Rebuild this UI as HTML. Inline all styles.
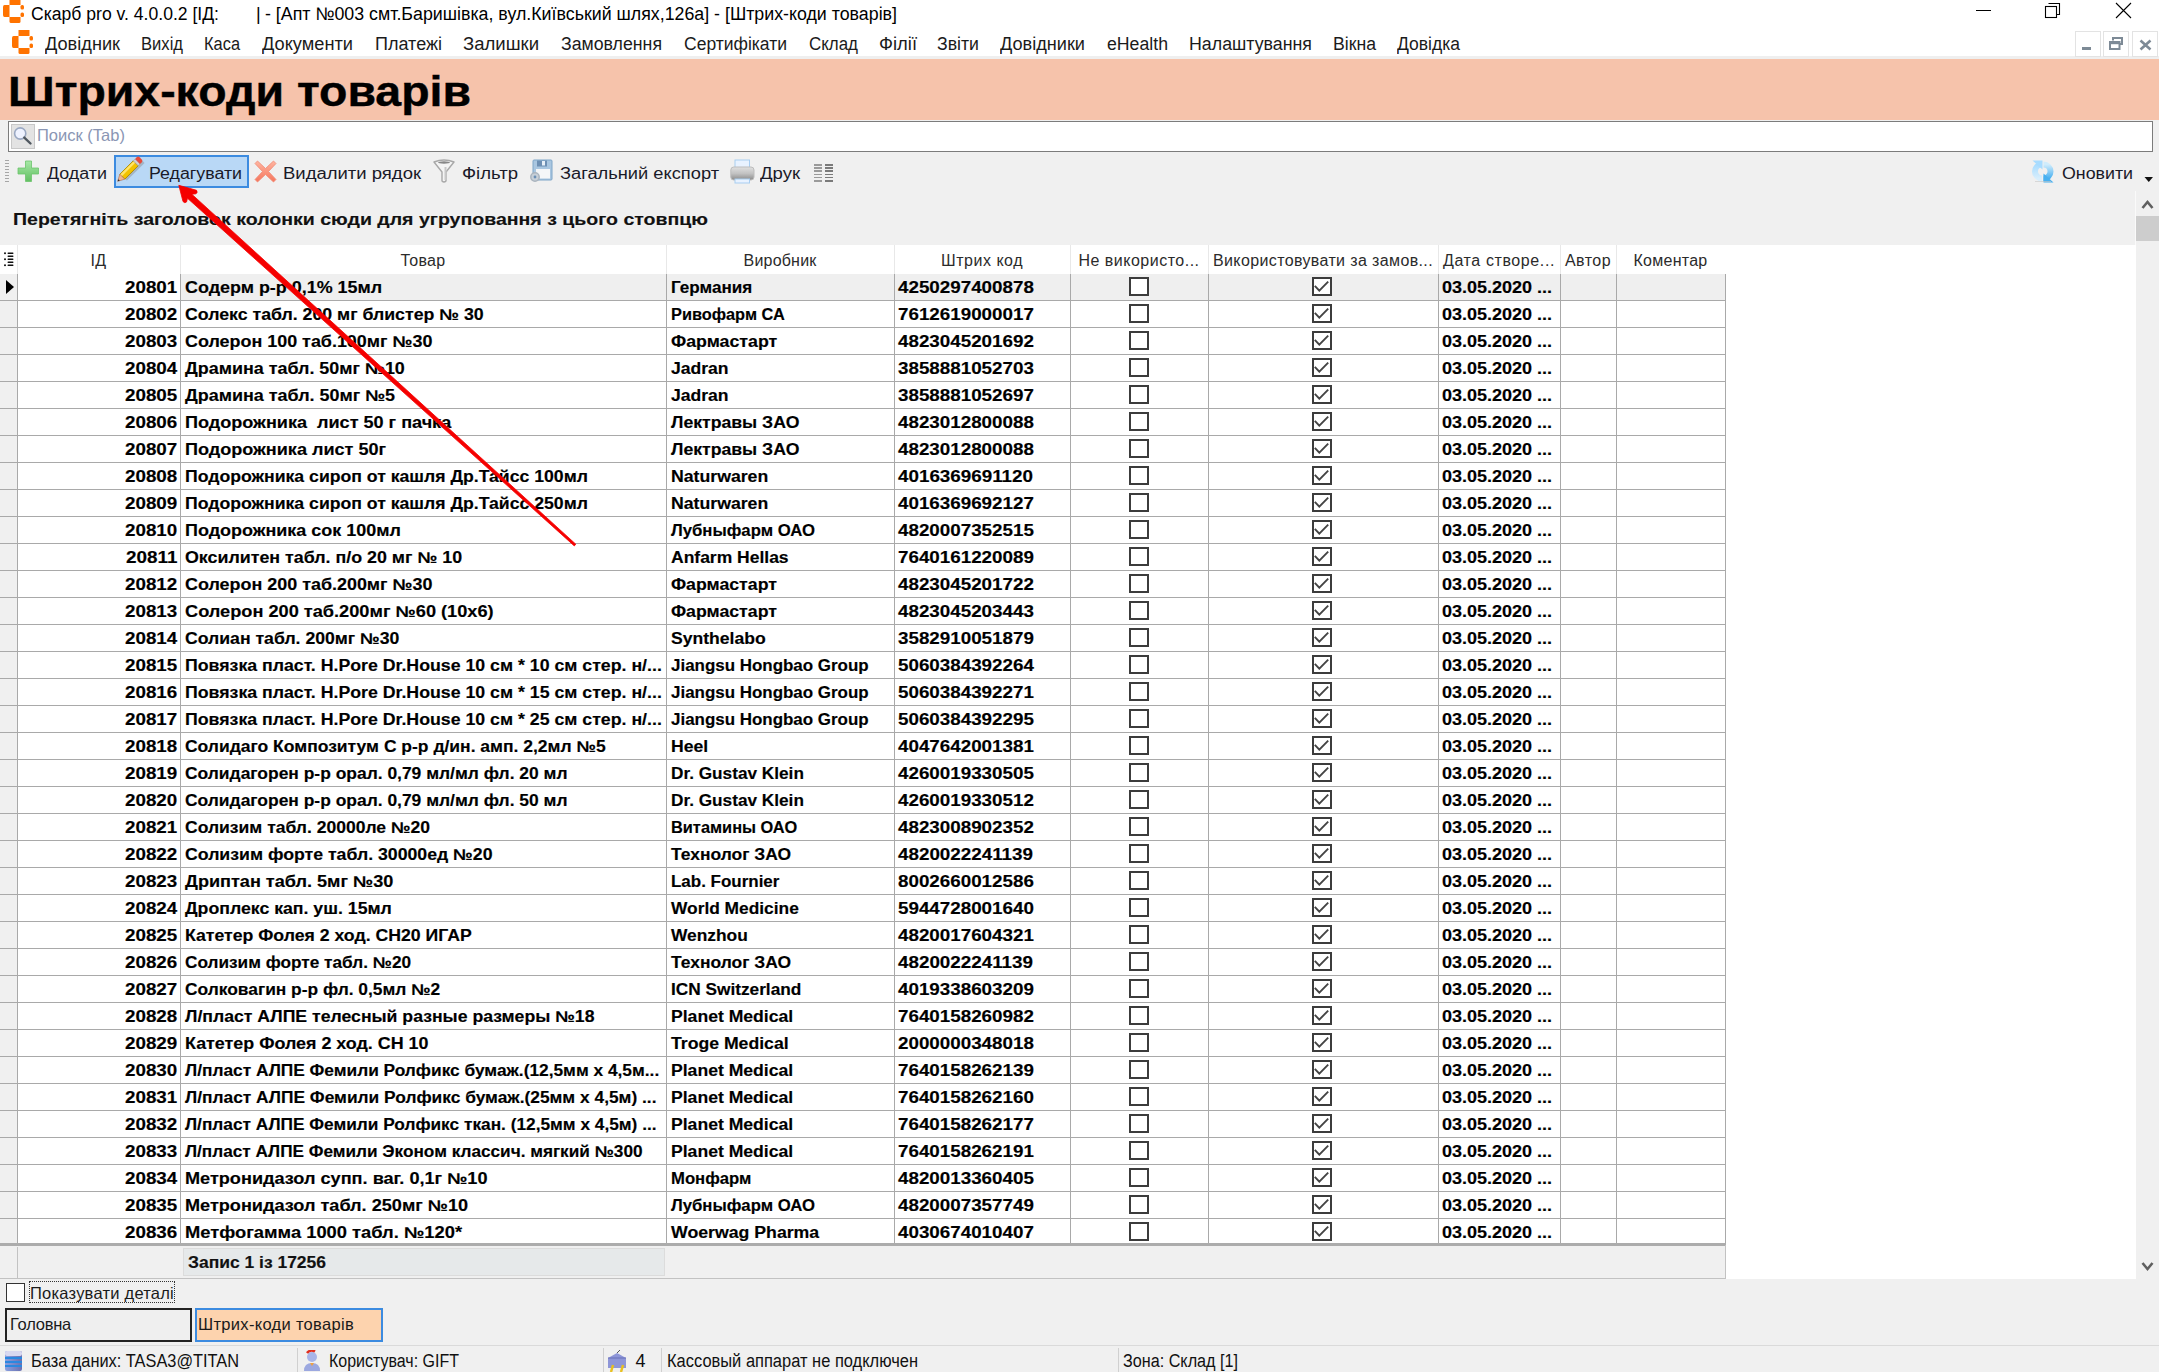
<!DOCTYPE html>
<html><head><meta charset="utf-8"><style>
html,body{margin:0;padding:0;}
body{width:2159px;height:1372px;position:relative;overflow:hidden;background:#fff;font-family:"Liberation Sans",sans-serif;}
.t{position:absolute;white-space:pre;line-height:1.117;transform-origin:0 0;}
.r{position:absolute;}
.cb{position:absolute;width:20px;height:19px;border:2px solid #3c3c3c;box-sizing:border-box;background:#fff;}
.cb svg{position:absolute;left:-2px;top:-2px;}
</style></head><body>
<div class="r" style="left:0px;top:0px;width:2159px;height:28px;background:#ffffff;"></div>
<div class="t" style="left:31.00px;top:3.91px;font-size:18px;transform:scaleX(0.9765);">Скарб pro v. 4.0.0.2 [ІД:</div>
<div class="t" style="left:256.00px;top:3.91px;font-size:18px;">|</div>
<div class="t" style="left:265.00px;top:3.91px;font-size:18px;transform:scaleX(0.9883);">- [Апт №003 смт.Баришівка, вул.Київський шлях,126а] - [Штрих-коди товарів]</div>
<div class="r" style="left:0px;top:28px;width:2159px;height:29px;background:#ffffff;"></div>
<div class="r" style="left:0px;top:56px;width:2159px;height:3px;background:#efefef;"></div>
<div class="t" style="left:45.00px;top:34.21px;font-size:18px;transform:scaleX(1.0089);color:#1b1b1b;">Довідник</div>
<div class="t" style="left:141.00px;top:34.21px;font-size:18px;transform:scaleX(0.9218);color:#1b1b1b;">Вихід</div>
<div class="t" style="left:204.00px;top:34.21px;font-size:18px;transform:scaleX(0.9112);color:#1b1b1b;">Каса</div>
<div class="t" style="left:262.00px;top:34.21px;font-size:18px;transform:scaleX(1.0122);color:#1b1b1b;">Документи</div>
<div class="t" style="left:375.00px;top:34.21px;font-size:18px;transform:scaleX(1.0008);color:#1b1b1b;">Платежі</div>
<div class="t" style="left:463.00px;top:34.21px;font-size:18px;transform:scaleX(1.0297);color:#1b1b1b;">Залишки</div>
<div class="t" style="left:561.00px;top:34.21px;font-size:18px;transform:scaleX(0.9848);color:#1b1b1b;">Замовлення</div>
<div class="t" style="left:684.00px;top:34.21px;font-size:18px;transform:scaleX(0.9725);color:#1b1b1b;">Сертифікати</div>
<div class="t" style="left:809.00px;top:34.21px;font-size:18px;transform:scaleX(0.9406);color:#1b1b1b;">Склад</div>
<div class="t" style="left:879.00px;top:34.21px;font-size:18px;transform:scaleX(1.0219);color:#1b1b1b;">Філії</div>
<div class="t" style="left:937.00px;top:34.21px;font-size:18px;transform:scaleX(0.9829);color:#1b1b1b;">Звіти</div>
<div class="t" style="left:1000.00px;top:34.21px;font-size:18px;transform:scaleX(1.0072);color:#1b1b1b;">Довідники</div>
<div class="t" style="left:1107.00px;top:34.21px;font-size:18px;transform:scaleX(0.9832);color:#1b1b1b;">eHealth</div>
<div class="t" style="left:1189.00px;top:34.21px;font-size:18px;transform:scaleX(0.9887);color:#1b1b1b;">Налаштування</div>
<div class="t" style="left:1333.00px;top:34.21px;font-size:18px;transform:scaleX(0.9810);color:#1b1b1b;">Вікна</div>
<div class="t" style="left:1397.00px;top:34.21px;font-size:18px;transform:scaleX(0.9730);color:#1b1b1b;">Довідка</div>
<div class="r" style="left:0px;top:59px;width:2159px;height:62px;background:#f6c3ab;"></div>
<div class="t" style="left:8.00px;top:68.99px;font-size:42px;font-weight:bold;transform:scaleX(1.1057);-webkit-text-stroke:0.4px #000;">Штрих-коди товарів</div>
<div class="r" style="left:0px;top:120px;width:2159px;height:1252px;background:#f0f0f0;"></div>
<div class="r" style="left:8px;top:121px;width:2145px;height:31px;background:#ffffff;border:1px solid #7c7c7c;box-sizing:border-box;"></div>
<div class="r" style="left:11px;top:124px;width:24px;height:25px;background:#e3e3e3;border:1px solid #c8c8c8;box-sizing:border-box;"></div>
<div class="t" style="left:37.00px;top:126.07px;font-size:16.5px;letter-spacing:0.009px;color:#8a96b4;">Поиск (Tab)</div>
<div class="t" style="left:47.00px;top:164.52px;font-size:16px;transform:scaleX(1.1171);color:#1a1a28;">Додати</div>
<div class="r" style="left:114px;top:155px;width:135px;height:33px;background:#b9d8f6;border:2px solid #3c8be0;box-sizing:border-box;"></div>
<div class="t" style="left:149.00px;top:164.52px;font-size:16px;transform:scaleX(1.1109);color:#1a1a28;">Редагувати</div>
<div class="t" style="left:283.00px;top:164.52px;font-size:16px;transform:scaleX(1.1553);color:#1a1a28;">Видалити рядок</div>
<div class="t" style="left:462.00px;top:164.52px;font-size:16px;transform:scaleX(1.1578);color:#1a1a28;">Фільтр</div>
<div class="t" style="left:560.00px;top:164.52px;font-size:16px;transform:scaleX(1.1415);color:#1a1a28;">Загальний експорт</div>
<div class="t" style="left:760.00px;top:164.52px;font-size:16px;transform:scaleX(1.1576);color:#1a1a28;">Друк</div>
<div class="t" style="left:2062.00px;top:164.52px;font-size:16px;transform:scaleX(1.1114);color:#1a1a28;">Оновити</div>
<div class="t" style="left:13.00px;top:210.02px;font-size:17px;font-weight:bold;transform:scaleX(1.1483);-webkit-text-stroke:0.15px #111;color:#111;">Перетягніть заголовок колонки сюди для угруповання з цього стовпцю</div>
<div class="r" style="left:0px;top:245px;width:2136px;height:1034px;background:#ffffff;"></div>
<div class="t" style="left:90.50px;top:251.52px;font-size:16px;letter-spacing:0.359px;color:#2b2b2b;">ІД</div>
<div class="t" style="left:400.50px;top:251.52px;font-size:16px;letter-spacing:0.292px;color:#2b2b2b;">Товар</div>
<div class="t" style="left:743.50px;top:251.52px;font-size:16px;letter-spacing:0.207px;color:#2b2b2b;">Виробник</div>
<div class="t" style="left:941.00px;top:251.52px;font-size:16px;letter-spacing:0.518px;color:#2b2b2b;">Штрих код</div>
<div class="t" style="left:1078.50px;top:251.52px;font-size:16px;letter-spacing:0.491px;color:#2b2b2b;">Не використо...</div>
<div class="t" style="left:1213.00px;top:251.52px;font-size:16px;letter-spacing:0.372px;color:#2b2b2b;">Використовувати за замов...</div>
<div class="t" style="left:1443.00px;top:251.52px;font-size:16px;letter-spacing:0.603px;color:#2b2b2b;">Дата створе...</div>
<div class="t" style="left:1565.00px;top:251.52px;font-size:16px;letter-spacing:0.447px;color:#2b2b2b;">Автор</div>
<div class="t" style="left:1633.50px;top:251.52px;font-size:16px;letter-spacing:0.263px;color:#2b2b2b;">Коментар</div>
<div class="r" style="left:17px;top:245px;width:1px;height:29px;background:#e8e8e8;"></div>
<div class="r" style="left:180px;top:245px;width:1px;height:29px;background:#e8e8e8;"></div>
<div class="r" style="left:666px;top:245px;width:1px;height:29px;background:#e8e8e8;"></div>
<div class="r" style="left:894px;top:245px;width:1px;height:29px;background:#e8e8e8;"></div>
<div class="r" style="left:1070px;top:245px;width:1px;height:29px;background:#e8e8e8;"></div>
<div class="r" style="left:1208px;top:245px;width:1px;height:29px;background:#e8e8e8;"></div>
<div class="r" style="left:1438px;top:245px;width:1px;height:29px;background:#e8e8e8;"></div>
<div class="r" style="left:1560px;top:245px;width:1px;height:29px;background:#e8e8e8;"></div>
<div class="r" style="left:1616px;top:245px;width:1px;height:29px;background:#e8e8e8;"></div>
<div class="r" style="left:0px;top:274px;width:17px;height:969px;background:#f0f0f0;"></div>
<div class="r" style="left:181px;top:274px;width:1544px;height:26px;background:#efefef;"></div>
<div class="t" style="left:124.76px;top:278.52px;font-size:16px;font-weight:bold;transform:scaleX(1.1742);-webkit-text-stroke:0.15px #000;">20801</div>
<div class="t" style="left:185.00px;top:278.52px;font-size:16px;font-weight:bold;transform:scaleX(1.1196);-webkit-text-stroke:0.15px #000;">Содерм р-р 0,1% 15мл</div>
<div class="t" style="left:670.50px;top:278.52px;font-size:16px;font-weight:bold;transform:scaleX(1.0673);-webkit-text-stroke:0.15px #000;">Германия</div>
<div class="t" style="left:898.00px;top:278.52px;font-size:16px;font-weight:bold;transform:scaleX(1.1742);-webkit-text-stroke:0.15px #000;">4250297400878</div>
<div class="t" style="left:1442.00px;top:278.52px;font-size:16px;font-weight:bold;transform:scaleX(1.1241);-webkit-text-stroke:0.15px #000;">03.05.2020 ...</div>
<div class="r" style="left:0px;top:300px;width:1726px;height:1px;background:#a9a9a9;"></div>
<div class="cb" style="left:1129px;top:277px"></div>
<div class="cb" style="left:1312px;top:277px"><svg width="20" height="19" viewBox="0 0 20 19"><path d="M2.8 8.8 L7.3 13.6 L16.2 4.6" fill="none" stroke="#444" stroke-width="1.9"/></svg></div>
<div class="t" style="left:124.76px;top:305.52px;font-size:16px;font-weight:bold;transform:scaleX(1.1742);-webkit-text-stroke:0.15px #000;">20802</div>
<div class="t" style="left:185.00px;top:305.52px;font-size:16px;font-weight:bold;transform:scaleX(1.1072);-webkit-text-stroke:0.15px #000;">Солекс табл. 200 мг блистер № 30</div>
<div class="t" style="left:670.50px;top:305.52px;font-size:16px;font-weight:bold;transform:scaleX(1.0210);-webkit-text-stroke:0.15px #000;">Ривофарм СА</div>
<div class="t" style="left:898.00px;top:305.52px;font-size:16px;font-weight:bold;transform:scaleX(1.1742);-webkit-text-stroke:0.15px #000;">7612619000017</div>
<div class="t" style="left:1442.00px;top:305.52px;font-size:16px;font-weight:bold;transform:scaleX(1.1241);-webkit-text-stroke:0.15px #000;">03.05.2020 ...</div>
<div class="r" style="left:0px;top:327px;width:1726px;height:1px;background:#a9a9a9;"></div>
<div class="cb" style="left:1129px;top:304px"></div>
<div class="cb" style="left:1312px;top:304px"><svg width="20" height="19" viewBox="0 0 20 19"><path d="M2.8 8.8 L7.3 13.6 L16.2 4.6" fill="none" stroke="#444" stroke-width="1.9"/></svg></div>
<div class="t" style="left:124.76px;top:332.52px;font-size:16px;font-weight:bold;transform:scaleX(1.1742);-webkit-text-stroke:0.15px #000;">20803</div>
<div class="t" style="left:185.00px;top:332.52px;font-size:16px;font-weight:bold;transform:scaleX(1.1199);-webkit-text-stroke:0.15px #000;">Солерон 100 таб.100мг №30</div>
<div class="t" style="left:670.50px;top:332.52px;font-size:16px;font-weight:bold;transform:scaleX(1.1100);-webkit-text-stroke:0.15px #000;">Фармастарт</div>
<div class="t" style="left:898.00px;top:332.52px;font-size:16px;font-weight:bold;transform:scaleX(1.1742);-webkit-text-stroke:0.15px #000;">4823045201692</div>
<div class="t" style="left:1442.00px;top:332.52px;font-size:16px;font-weight:bold;transform:scaleX(1.1241);-webkit-text-stroke:0.15px #000;">03.05.2020 ...</div>
<div class="r" style="left:0px;top:354px;width:1726px;height:1px;background:#a9a9a9;"></div>
<div class="cb" style="left:1129px;top:331px"></div>
<div class="cb" style="left:1312px;top:331px"><svg width="20" height="19" viewBox="0 0 20 19"><path d="M2.8 8.8 L7.3 13.6 L16.2 4.6" fill="none" stroke="#444" stroke-width="1.9"/></svg></div>
<div class="t" style="left:124.76px;top:359.52px;font-size:16px;font-weight:bold;transform:scaleX(1.1742);-webkit-text-stroke:0.15px #000;">20804</div>
<div class="t" style="left:185.00px;top:359.52px;font-size:16px;font-weight:bold;transform:scaleX(1.1192);-webkit-text-stroke:0.15px #000;">Драмина табл. 50мг №10</div>
<div class="t" style="left:670.50px;top:359.52px;font-size:16px;font-weight:bold;transform:scaleX(1.0978);-webkit-text-stroke:0.15px #000;">Jadran</div>
<div class="t" style="left:898.00px;top:359.52px;font-size:16px;font-weight:bold;transform:scaleX(1.1742);-webkit-text-stroke:0.15px #000;">3858881052703</div>
<div class="t" style="left:1442.00px;top:359.52px;font-size:16px;font-weight:bold;transform:scaleX(1.1241);-webkit-text-stroke:0.15px #000;">03.05.2020 ...</div>
<div class="r" style="left:0px;top:381px;width:1726px;height:1px;background:#a9a9a9;"></div>
<div class="cb" style="left:1129px;top:358px"></div>
<div class="cb" style="left:1312px;top:358px"><svg width="20" height="19" viewBox="0 0 20 19"><path d="M2.8 8.8 L7.3 13.6 L16.2 4.6" fill="none" stroke="#444" stroke-width="1.9"/></svg></div>
<div class="t" style="left:124.76px;top:386.52px;font-size:16px;font-weight:bold;transform:scaleX(1.1742);-webkit-text-stroke:0.15px #000;">20805</div>
<div class="t" style="left:185.00px;top:386.52px;font-size:16px;font-weight:bold;transform:scaleX(1.1205);-webkit-text-stroke:0.15px #000;">Драмина табл. 50мг №5</div>
<div class="t" style="left:670.50px;top:386.52px;font-size:16px;font-weight:bold;transform:scaleX(1.0978);-webkit-text-stroke:0.15px #000;">Jadran</div>
<div class="t" style="left:898.00px;top:386.52px;font-size:16px;font-weight:bold;transform:scaleX(1.1742);-webkit-text-stroke:0.15px #000;">3858881052697</div>
<div class="t" style="left:1442.00px;top:386.52px;font-size:16px;font-weight:bold;transform:scaleX(1.1241);-webkit-text-stroke:0.15px #000;">03.05.2020 ...</div>
<div class="r" style="left:0px;top:408px;width:1726px;height:1px;background:#a9a9a9;"></div>
<div class="cb" style="left:1129px;top:385px"></div>
<div class="cb" style="left:1312px;top:385px"><svg width="20" height="19" viewBox="0 0 20 19"><path d="M2.8 8.8 L7.3 13.6 L16.2 4.6" fill="none" stroke="#444" stroke-width="1.9"/></svg></div>
<div class="t" style="left:124.76px;top:413.52px;font-size:16px;font-weight:bold;transform:scaleX(1.1742);-webkit-text-stroke:0.15px #000;">20806</div>
<div class="t" style="left:185.00px;top:413.52px;font-size:16px;font-weight:bold;transform:scaleX(1.1286);-webkit-text-stroke:0.15px #000;">Подорожника  лист 50 г пачка</div>
<div class="t" style="left:670.50px;top:413.52px;font-size:16px;font-weight:bold;transform:scaleX(1.1031);-webkit-text-stroke:0.15px #000;">Лектравы ЗАО</div>
<div class="t" style="left:898.00px;top:413.52px;font-size:16px;font-weight:bold;transform:scaleX(1.1742);-webkit-text-stroke:0.15px #000;">4823012800088</div>
<div class="t" style="left:1442.00px;top:413.52px;font-size:16px;font-weight:bold;transform:scaleX(1.1241);-webkit-text-stroke:0.15px #000;">03.05.2020 ...</div>
<div class="r" style="left:0px;top:435px;width:1726px;height:1px;background:#a9a9a9;"></div>
<div class="cb" style="left:1129px;top:412px"></div>
<div class="cb" style="left:1312px;top:412px"><svg width="20" height="19" viewBox="0 0 20 19"><path d="M2.8 8.8 L7.3 13.6 L16.2 4.6" fill="none" stroke="#444" stroke-width="1.9"/></svg></div>
<div class="t" style="left:124.76px;top:440.52px;font-size:16px;font-weight:bold;transform:scaleX(1.1742);-webkit-text-stroke:0.15px #000;">20807</div>
<div class="t" style="left:185.00px;top:440.52px;font-size:16px;font-weight:bold;transform:scaleX(1.1282);-webkit-text-stroke:0.15px #000;">Подорожника лист 50г</div>
<div class="t" style="left:670.50px;top:440.52px;font-size:16px;font-weight:bold;transform:scaleX(1.1031);-webkit-text-stroke:0.15px #000;">Лектравы ЗАО</div>
<div class="t" style="left:898.00px;top:440.52px;font-size:16px;font-weight:bold;transform:scaleX(1.1742);-webkit-text-stroke:0.15px #000;">4823012800088</div>
<div class="t" style="left:1442.00px;top:440.52px;font-size:16px;font-weight:bold;transform:scaleX(1.1241);-webkit-text-stroke:0.15px #000;">03.05.2020 ...</div>
<div class="r" style="left:0px;top:462px;width:1726px;height:1px;background:#a9a9a9;"></div>
<div class="cb" style="left:1129px;top:439px"></div>
<div class="cb" style="left:1312px;top:439px"><svg width="20" height="19" viewBox="0 0 20 19"><path d="M2.8 8.8 L7.3 13.6 L16.2 4.6" fill="none" stroke="#444" stroke-width="1.9"/></svg></div>
<div class="t" style="left:124.76px;top:467.52px;font-size:16px;font-weight:bold;transform:scaleX(1.1742);-webkit-text-stroke:0.15px #000;">20808</div>
<div class="t" style="left:185.00px;top:467.52px;font-size:16px;font-weight:bold;transform:scaleX(1.1026);-webkit-text-stroke:0.15px #000;">Подорожника сироп от кашля Др.Тайсс 100мл</div>
<div class="t" style="left:670.50px;top:467.52px;font-size:16px;font-weight:bold;transform:scaleX(1.1043);-webkit-text-stroke:0.15px #000;">Naturwaren</div>
<div class="t" style="left:898.00px;top:467.52px;font-size:16px;font-weight:bold;transform:scaleX(1.1755);-webkit-text-stroke:0.15px #000;">4016369691120</div>
<div class="t" style="left:1442.00px;top:467.52px;font-size:16px;font-weight:bold;transform:scaleX(1.1241);-webkit-text-stroke:0.15px #000;">03.05.2020 ...</div>
<div class="r" style="left:0px;top:489px;width:1726px;height:1px;background:#a9a9a9;"></div>
<div class="cb" style="left:1129px;top:466px"></div>
<div class="cb" style="left:1312px;top:466px"><svg width="20" height="19" viewBox="0 0 20 19"><path d="M2.8 8.8 L7.3 13.6 L16.2 4.6" fill="none" stroke="#444" stroke-width="1.9"/></svg></div>
<div class="t" style="left:124.76px;top:494.52px;font-size:16px;font-weight:bold;transform:scaleX(1.1742);-webkit-text-stroke:0.15px #000;">20809</div>
<div class="t" style="left:185.00px;top:494.52px;font-size:16px;font-weight:bold;transform:scaleX(1.1026);-webkit-text-stroke:0.15px #000;">Подорожника сироп от кашля Др.Тайсс 250мл</div>
<div class="t" style="left:670.50px;top:494.52px;font-size:16px;font-weight:bold;transform:scaleX(1.1043);-webkit-text-stroke:0.15px #000;">Naturwaren</div>
<div class="t" style="left:898.00px;top:494.52px;font-size:16px;font-weight:bold;transform:scaleX(1.1742);-webkit-text-stroke:0.15px #000;">4016369692127</div>
<div class="t" style="left:1442.00px;top:494.52px;font-size:16px;font-weight:bold;transform:scaleX(1.1241);-webkit-text-stroke:0.15px #000;">03.05.2020 ...</div>
<div class="r" style="left:0px;top:516px;width:1726px;height:1px;background:#a9a9a9;"></div>
<div class="cb" style="left:1129px;top:493px"></div>
<div class="cb" style="left:1312px;top:493px"><svg width="20" height="19" viewBox="0 0 20 19"><path d="M2.8 8.8 L7.3 13.6 L16.2 4.6" fill="none" stroke="#444" stroke-width="1.9"/></svg></div>
<div class="t" style="left:124.76px;top:521.52px;font-size:16px;font-weight:bold;transform:scaleX(1.1742);-webkit-text-stroke:0.15px #000;">20810</div>
<div class="t" style="left:185.00px;top:521.52px;font-size:16px;font-weight:bold;transform:scaleX(1.1225);-webkit-text-stroke:0.15px #000;">Подорожника сок 100мл</div>
<div class="t" style="left:670.50px;top:521.52px;font-size:16px;font-weight:bold;transform:scaleX(1.0449);-webkit-text-stroke:0.15px #000;">Лубныфарм ОАО</div>
<div class="t" style="left:898.00px;top:521.52px;font-size:16px;font-weight:bold;transform:scaleX(1.1742);-webkit-text-stroke:0.15px #000;">4820007352515</div>
<div class="t" style="left:1442.00px;top:521.52px;font-size:16px;font-weight:bold;transform:scaleX(1.1241);-webkit-text-stroke:0.15px #000;">03.05.2020 ...</div>
<div class="r" style="left:0px;top:543px;width:1726px;height:1px;background:#a9a9a9;"></div>
<div class="cb" style="left:1129px;top:520px"></div>
<div class="cb" style="left:1312px;top:520px"><svg width="20" height="19" viewBox="0 0 20 19"><path d="M2.8 8.8 L7.3 13.6 L16.2 4.6" fill="none" stroke="#444" stroke-width="1.9"/></svg></div>
<div class="t" style="left:125.64px;top:548.52px;font-size:16px;font-weight:bold;transform:scaleX(1.1777);-webkit-text-stroke:0.15px #000;">20811</div>
<div class="t" style="left:185.00px;top:548.52px;font-size:16px;font-weight:bold;transform:scaleX(1.1142);-webkit-text-stroke:0.15px #000;">Оксилитен табл. п/о 20 мг № 10</div>
<div class="t" style="left:670.50px;top:548.52px;font-size:16px;font-weight:bold;transform:scaleX(1.0930);-webkit-text-stroke:0.15px #000;">Anfarm Hellas</div>
<div class="t" style="left:898.00px;top:548.52px;font-size:16px;font-weight:bold;transform:scaleX(1.1742);-webkit-text-stroke:0.15px #000;">7640161220089</div>
<div class="t" style="left:1442.00px;top:548.52px;font-size:16px;font-weight:bold;transform:scaleX(1.1241);-webkit-text-stroke:0.15px #000;">03.05.2020 ...</div>
<div class="r" style="left:0px;top:570px;width:1726px;height:1px;background:#a9a9a9;"></div>
<div class="cb" style="left:1129px;top:547px"></div>
<div class="cb" style="left:1312px;top:547px"><svg width="20" height="19" viewBox="0 0 20 19"><path d="M2.8 8.8 L7.3 13.6 L16.2 4.6" fill="none" stroke="#444" stroke-width="1.9"/></svg></div>
<div class="t" style="left:124.76px;top:575.52px;font-size:16px;font-weight:bold;transform:scaleX(1.1742);-webkit-text-stroke:0.15px #000;">20812</div>
<div class="t" style="left:185.00px;top:575.52px;font-size:16px;font-weight:bold;transform:scaleX(1.1203);-webkit-text-stroke:0.15px #000;">Солерон 200 таб.200мг №30</div>
<div class="t" style="left:670.50px;top:575.52px;font-size:16px;font-weight:bold;transform:scaleX(1.1069);-webkit-text-stroke:0.15px #000;">Фармастарт</div>
<div class="t" style="left:898.00px;top:575.52px;font-size:16px;font-weight:bold;transform:scaleX(1.1742);-webkit-text-stroke:0.15px #000;">4823045201722</div>
<div class="t" style="left:1442.00px;top:575.52px;font-size:16px;font-weight:bold;transform:scaleX(1.1241);-webkit-text-stroke:0.15px #000;">03.05.2020 ...</div>
<div class="r" style="left:0px;top:597px;width:1726px;height:1px;background:#a9a9a9;"></div>
<div class="cb" style="left:1129px;top:574px"></div>
<div class="cb" style="left:1312px;top:574px"><svg width="20" height="19" viewBox="0 0 20 19"><path d="M2.8 8.8 L7.3 13.6 L16.2 4.6" fill="none" stroke="#444" stroke-width="1.9"/></svg></div>
<div class="t" style="left:124.76px;top:602.52px;font-size:16px;font-weight:bold;transform:scaleX(1.1742);-webkit-text-stroke:0.15px #000;">20813</div>
<div class="t" style="left:185.00px;top:602.52px;font-size:16px;font-weight:bold;transform:scaleX(1.1362);-webkit-text-stroke:0.15px #000;">Солерон 200 таб.200мг №60 (10х6)</div>
<div class="t" style="left:670.50px;top:602.52px;font-size:16px;font-weight:bold;transform:scaleX(1.1069);-webkit-text-stroke:0.15px #000;">Фармастарт</div>
<div class="t" style="left:898.00px;top:602.52px;font-size:16px;font-weight:bold;transform:scaleX(1.1742);-webkit-text-stroke:0.15px #000;">4823045203443</div>
<div class="t" style="left:1442.00px;top:602.52px;font-size:16px;font-weight:bold;transform:scaleX(1.1241);-webkit-text-stroke:0.15px #000;">03.05.2020 ...</div>
<div class="r" style="left:0px;top:624px;width:1726px;height:1px;background:#a9a9a9;"></div>
<div class="cb" style="left:1129px;top:601px"></div>
<div class="cb" style="left:1312px;top:601px"><svg width="20" height="19" viewBox="0 0 20 19"><path d="M2.8 8.8 L7.3 13.6 L16.2 4.6" fill="none" stroke="#444" stroke-width="1.9"/></svg></div>
<div class="t" style="left:124.76px;top:629.52px;font-size:16px;font-weight:bold;transform:scaleX(1.1742);-webkit-text-stroke:0.15px #000;">20814</div>
<div class="t" style="left:185.00px;top:629.52px;font-size:16px;font-weight:bold;transform:scaleX(1.1024);-webkit-text-stroke:0.15px #000;">Солиан табл. 200мг №30</div>
<div class="t" style="left:670.50px;top:629.52px;font-size:16px;font-weight:bold;transform:scaleX(1.0982);-webkit-text-stroke:0.15px #000;">Synthelabo</div>
<div class="t" style="left:898.00px;top:629.52px;font-size:16px;font-weight:bold;transform:scaleX(1.1742);-webkit-text-stroke:0.15px #000;">3582910051879</div>
<div class="t" style="left:1442.00px;top:629.52px;font-size:16px;font-weight:bold;transform:scaleX(1.1241);-webkit-text-stroke:0.15px #000;">03.05.2020 ...</div>
<div class="r" style="left:0px;top:651px;width:1726px;height:1px;background:#a9a9a9;"></div>
<div class="cb" style="left:1129px;top:628px"></div>
<div class="cb" style="left:1312px;top:628px"><svg width="20" height="19" viewBox="0 0 20 19"><path d="M2.8 8.8 L7.3 13.6 L16.2 4.6" fill="none" stroke="#444" stroke-width="1.9"/></svg></div>
<div class="t" style="left:124.76px;top:656.52px;font-size:16px;font-weight:bold;transform:scaleX(1.1742);-webkit-text-stroke:0.15px #000;">20815</div>
<div class="t" style="left:185.00px;top:656.52px;font-size:16px;font-weight:bold;transform:scaleX(1.1077);-webkit-text-stroke:0.15px #000;">Повязка пласт. H.Pore Dr.House 10 см * 10 см стер. н/...</div>
<div class="t" style="left:670.50px;top:656.52px;font-size:16px;font-weight:bold;transform:scaleX(1.0586);-webkit-text-stroke:0.15px #000;">Jiangsu Hongbao Group</div>
<div class="t" style="left:898.00px;top:656.52px;font-size:16px;font-weight:bold;transform:scaleX(1.1742);-webkit-text-stroke:0.15px #000;">5060384392264</div>
<div class="t" style="left:1442.00px;top:656.52px;font-size:16px;font-weight:bold;transform:scaleX(1.1241);-webkit-text-stroke:0.15px #000;">03.05.2020 ...</div>
<div class="r" style="left:0px;top:678px;width:1726px;height:1px;background:#a9a9a9;"></div>
<div class="cb" style="left:1129px;top:655px"></div>
<div class="cb" style="left:1312px;top:655px"><svg width="20" height="19" viewBox="0 0 20 19"><path d="M2.8 8.8 L7.3 13.6 L16.2 4.6" fill="none" stroke="#444" stroke-width="1.9"/></svg></div>
<div class="t" style="left:124.76px;top:683.52px;font-size:16px;font-weight:bold;transform:scaleX(1.1742);-webkit-text-stroke:0.15px #000;">20816</div>
<div class="t" style="left:185.00px;top:683.52px;font-size:16px;font-weight:bold;transform:scaleX(1.1077);-webkit-text-stroke:0.15px #000;">Повязка пласт. H.Pore Dr.House 10 см * 15 см стер. н/...</div>
<div class="t" style="left:670.50px;top:683.52px;font-size:16px;font-weight:bold;transform:scaleX(1.0586);-webkit-text-stroke:0.15px #000;">Jiangsu Hongbao Group</div>
<div class="t" style="left:898.00px;top:683.52px;font-size:16px;font-weight:bold;transform:scaleX(1.1742);-webkit-text-stroke:0.15px #000;">5060384392271</div>
<div class="t" style="left:1442.00px;top:683.52px;font-size:16px;font-weight:bold;transform:scaleX(1.1241);-webkit-text-stroke:0.15px #000;">03.05.2020 ...</div>
<div class="r" style="left:0px;top:705px;width:1726px;height:1px;background:#a9a9a9;"></div>
<div class="cb" style="left:1129px;top:682px"></div>
<div class="cb" style="left:1312px;top:682px"><svg width="20" height="19" viewBox="0 0 20 19"><path d="M2.8 8.8 L7.3 13.6 L16.2 4.6" fill="none" stroke="#444" stroke-width="1.9"/></svg></div>
<div class="t" style="left:124.76px;top:710.52px;font-size:16px;font-weight:bold;transform:scaleX(1.1742);-webkit-text-stroke:0.15px #000;">20817</div>
<div class="t" style="left:185.00px;top:710.52px;font-size:16px;font-weight:bold;transform:scaleX(1.1077);-webkit-text-stroke:0.15px #000;">Повязка пласт. H.Pore Dr.House 10 см * 25 см стер. н/...</div>
<div class="t" style="left:670.50px;top:710.52px;font-size:16px;font-weight:bold;transform:scaleX(1.0586);-webkit-text-stroke:0.15px #000;">Jiangsu Hongbao Group</div>
<div class="t" style="left:898.00px;top:710.52px;font-size:16px;font-weight:bold;transform:scaleX(1.1742);-webkit-text-stroke:0.15px #000;">5060384392295</div>
<div class="t" style="left:1442.00px;top:710.52px;font-size:16px;font-weight:bold;transform:scaleX(1.1241);-webkit-text-stroke:0.15px #000;">03.05.2020 ...</div>
<div class="r" style="left:0px;top:732px;width:1726px;height:1px;background:#a9a9a9;"></div>
<div class="cb" style="left:1129px;top:709px"></div>
<div class="cb" style="left:1312px;top:709px"><svg width="20" height="19" viewBox="0 0 20 19"><path d="M2.8 8.8 L7.3 13.6 L16.2 4.6" fill="none" stroke="#444" stroke-width="1.9"/></svg></div>
<div class="t" style="left:124.76px;top:737.52px;font-size:16px;font-weight:bold;transform:scaleX(1.1742);-webkit-text-stroke:0.15px #000;">20818</div>
<div class="t" style="left:185.00px;top:737.52px;font-size:16px;font-weight:bold;transform:scaleX(1.0925);-webkit-text-stroke:0.15px #000;">Солидаго Композитум С р-р д/ин. амп. 2,2мл №5</div>
<div class="t" style="left:670.50px;top:737.52px;font-size:16px;font-weight:bold;transform:scaleX(1.0977);-webkit-text-stroke:0.15px #000;">Heel</div>
<div class="t" style="left:898.00px;top:737.52px;font-size:16px;font-weight:bold;transform:scaleX(1.1742);-webkit-text-stroke:0.15px #000;">4047642001381</div>
<div class="t" style="left:1442.00px;top:737.52px;font-size:16px;font-weight:bold;transform:scaleX(1.1241);-webkit-text-stroke:0.15px #000;">03.05.2020 ...</div>
<div class="r" style="left:0px;top:759px;width:1726px;height:1px;background:#a9a9a9;"></div>
<div class="cb" style="left:1129px;top:736px"></div>
<div class="cb" style="left:1312px;top:736px"><svg width="20" height="19" viewBox="0 0 20 19"><path d="M2.8 8.8 L7.3 13.6 L16.2 4.6" fill="none" stroke="#444" stroke-width="1.9"/></svg></div>
<div class="t" style="left:124.76px;top:764.52px;font-size:16px;font-weight:bold;transform:scaleX(1.1742);-webkit-text-stroke:0.15px #000;">20819</div>
<div class="t" style="left:185.00px;top:764.52px;font-size:16px;font-weight:bold;transform:scaleX(1.0892);-webkit-text-stroke:0.15px #000;">Солидагорен р-р орал. 0,79 мл/мл фл. 20 мл</div>
<div class="t" style="left:670.50px;top:764.52px;font-size:16px;font-weight:bold;transform:scaleX(1.0753);-webkit-text-stroke:0.15px #000;">Dr. Gustav Klein</div>
<div class="t" style="left:898.00px;top:764.52px;font-size:16px;font-weight:bold;transform:scaleX(1.1742);-webkit-text-stroke:0.15px #000;">4260019330505</div>
<div class="t" style="left:1442.00px;top:764.52px;font-size:16px;font-weight:bold;transform:scaleX(1.1241);-webkit-text-stroke:0.15px #000;">03.05.2020 ...</div>
<div class="r" style="left:0px;top:786px;width:1726px;height:1px;background:#a9a9a9;"></div>
<div class="cb" style="left:1129px;top:763px"></div>
<div class="cb" style="left:1312px;top:763px"><svg width="20" height="19" viewBox="0 0 20 19"><path d="M2.8 8.8 L7.3 13.6 L16.2 4.6" fill="none" stroke="#444" stroke-width="1.9"/></svg></div>
<div class="t" style="left:124.76px;top:791.52px;font-size:16px;font-weight:bold;transform:scaleX(1.1742);-webkit-text-stroke:0.15px #000;">20820</div>
<div class="t" style="left:185.00px;top:791.52px;font-size:16px;font-weight:bold;transform:scaleX(1.0892);-webkit-text-stroke:0.15px #000;">Солидагорен р-р орал. 0,79 мл/мл фл. 50 мл</div>
<div class="t" style="left:670.50px;top:791.52px;font-size:16px;font-weight:bold;transform:scaleX(1.0753);-webkit-text-stroke:0.15px #000;">Dr. Gustav Klein</div>
<div class="t" style="left:898.00px;top:791.52px;font-size:16px;font-weight:bold;transform:scaleX(1.1742);-webkit-text-stroke:0.15px #000;">4260019330512</div>
<div class="t" style="left:1442.00px;top:791.52px;font-size:16px;font-weight:bold;transform:scaleX(1.1241);-webkit-text-stroke:0.15px #000;">03.05.2020 ...</div>
<div class="r" style="left:0px;top:813px;width:1726px;height:1px;background:#a9a9a9;"></div>
<div class="cb" style="left:1129px;top:790px"></div>
<div class="cb" style="left:1312px;top:790px"><svg width="20" height="19" viewBox="0 0 20 19"><path d="M2.8 8.8 L7.3 13.6 L16.2 4.6" fill="none" stroke="#444" stroke-width="1.9"/></svg></div>
<div class="t" style="left:124.76px;top:818.52px;font-size:16px;font-weight:bold;transform:scaleX(1.1742);-webkit-text-stroke:0.15px #000;">20821</div>
<div class="t" style="left:185.00px;top:818.52px;font-size:16px;font-weight:bold;transform:scaleX(1.0952);-webkit-text-stroke:0.15px #000;">Солизим табл. 20000ле №20</div>
<div class="t" style="left:670.50px;top:818.52px;font-size:16px;font-weight:bold;transform:scaleX(1.0226);-webkit-text-stroke:0.15px #000;">Витамины ОАО</div>
<div class="t" style="left:898.00px;top:818.52px;font-size:16px;font-weight:bold;transform:scaleX(1.1742);-webkit-text-stroke:0.15px #000;">4823008902352</div>
<div class="t" style="left:1442.00px;top:818.52px;font-size:16px;font-weight:bold;transform:scaleX(1.1241);-webkit-text-stroke:0.15px #000;">03.05.2020 ...</div>
<div class="r" style="left:0px;top:840px;width:1726px;height:1px;background:#a9a9a9;"></div>
<div class="cb" style="left:1129px;top:817px"></div>
<div class="cb" style="left:1312px;top:817px"><svg width="20" height="19" viewBox="0 0 20 19"><path d="M2.8 8.8 L7.3 13.6 L16.2 4.6" fill="none" stroke="#444" stroke-width="1.9"/></svg></div>
<div class="t" style="left:124.76px;top:845.52px;font-size:16px;font-weight:bold;transform:scaleX(1.1742);-webkit-text-stroke:0.15px #000;">20822</div>
<div class="t" style="left:185.00px;top:845.52px;font-size:16px;font-weight:bold;transform:scaleX(1.1053);-webkit-text-stroke:0.15px #000;">Солизим форте табл. 30000ед №20</div>
<div class="t" style="left:670.50px;top:845.52px;font-size:16px;font-weight:bold;transform:scaleX(1.0893);-webkit-text-stroke:0.15px #000;">Технолог ЗАО</div>
<div class="t" style="left:898.00px;top:845.52px;font-size:16px;font-weight:bold;transform:scaleX(1.1755);-webkit-text-stroke:0.15px #000;">4820022241139</div>
<div class="t" style="left:1442.00px;top:845.52px;font-size:16px;font-weight:bold;transform:scaleX(1.1241);-webkit-text-stroke:0.15px #000;">03.05.2020 ...</div>
<div class="r" style="left:0px;top:867px;width:1726px;height:1px;background:#a9a9a9;"></div>
<div class="cb" style="left:1129px;top:844px"></div>
<div class="cb" style="left:1312px;top:844px"><svg width="20" height="19" viewBox="0 0 20 19"><path d="M2.8 8.8 L7.3 13.6 L16.2 4.6" fill="none" stroke="#444" stroke-width="1.9"/></svg></div>
<div class="t" style="left:124.76px;top:872.52px;font-size:16px;font-weight:bold;transform:scaleX(1.1742);-webkit-text-stroke:0.15px #000;">20823</div>
<div class="t" style="left:185.00px;top:872.52px;font-size:16px;font-weight:bold;transform:scaleX(1.1304);-webkit-text-stroke:0.15px #000;">Дриптан табл. 5мг №30</div>
<div class="t" style="left:670.50px;top:872.52px;font-size:16px;font-weight:bold;transform:scaleX(1.0604);-webkit-text-stroke:0.15px #000;">Lab. Fournier</div>
<div class="t" style="left:898.00px;top:872.52px;font-size:16px;font-weight:bold;transform:scaleX(1.1742);-webkit-text-stroke:0.15px #000;">8002660012586</div>
<div class="t" style="left:1442.00px;top:872.52px;font-size:16px;font-weight:bold;transform:scaleX(1.1241);-webkit-text-stroke:0.15px #000;">03.05.2020 ...</div>
<div class="r" style="left:0px;top:894px;width:1726px;height:1px;background:#a9a9a9;"></div>
<div class="cb" style="left:1129px;top:871px"></div>
<div class="cb" style="left:1312px;top:871px"><svg width="20" height="19" viewBox="0 0 20 19"><path d="M2.8 8.8 L7.3 13.6 L16.2 4.6" fill="none" stroke="#444" stroke-width="1.9"/></svg></div>
<div class="t" style="left:124.76px;top:899.52px;font-size:16px;font-weight:bold;transform:scaleX(1.1742);-webkit-text-stroke:0.15px #000;">20824</div>
<div class="t" style="left:185.00px;top:899.52px;font-size:16px;font-weight:bold;transform:scaleX(1.1060);-webkit-text-stroke:0.15px #000;">Дроплекс кап. уш. 15мл</div>
<div class="t" style="left:670.50px;top:899.52px;font-size:16px;font-weight:bold;transform:scaleX(1.0836);-webkit-text-stroke:0.15px #000;">World Medicine</div>
<div class="t" style="left:898.00px;top:899.52px;font-size:16px;font-weight:bold;transform:scaleX(1.1742);-webkit-text-stroke:0.15px #000;">5944728001640</div>
<div class="t" style="left:1442.00px;top:899.52px;font-size:16px;font-weight:bold;transform:scaleX(1.1241);-webkit-text-stroke:0.15px #000;">03.05.2020 ...</div>
<div class="r" style="left:0px;top:921px;width:1726px;height:1px;background:#a9a9a9;"></div>
<div class="cb" style="left:1129px;top:898px"></div>
<div class="cb" style="left:1312px;top:898px"><svg width="20" height="19" viewBox="0 0 20 19"><path d="M2.8 8.8 L7.3 13.6 L16.2 4.6" fill="none" stroke="#444" stroke-width="1.9"/></svg></div>
<div class="t" style="left:124.76px;top:926.52px;font-size:16px;font-weight:bold;transform:scaleX(1.1742);-webkit-text-stroke:0.15px #000;">20825</div>
<div class="t" style="left:185.00px;top:926.52px;font-size:16px;font-weight:bold;transform:scaleX(1.1044);-webkit-text-stroke:0.15px #000;">Катетер Фолея 2 ход. CH20 ИГАР</div>
<div class="t" style="left:670.50px;top:926.52px;font-size:16px;font-weight:bold;transform:scaleX(1.0847);-webkit-text-stroke:0.15px #000;">Wenzhou</div>
<div class="t" style="left:898.00px;top:926.52px;font-size:16px;font-weight:bold;transform:scaleX(1.1742);-webkit-text-stroke:0.15px #000;">4820017604321</div>
<div class="t" style="left:1442.00px;top:926.52px;font-size:16px;font-weight:bold;transform:scaleX(1.1241);-webkit-text-stroke:0.15px #000;">03.05.2020 ...</div>
<div class="r" style="left:0px;top:948px;width:1726px;height:1px;background:#a9a9a9;"></div>
<div class="cb" style="left:1129px;top:925px"></div>
<div class="cb" style="left:1312px;top:925px"><svg width="20" height="19" viewBox="0 0 20 19"><path d="M2.8 8.8 L7.3 13.6 L16.2 4.6" fill="none" stroke="#444" stroke-width="1.9"/></svg></div>
<div class="t" style="left:124.76px;top:953.52px;font-size:16px;font-weight:bold;transform:scaleX(1.1742);-webkit-text-stroke:0.15px #000;">20826</div>
<div class="t" style="left:185.00px;top:953.52px;font-size:16px;font-weight:bold;transform:scaleX(1.0756);-webkit-text-stroke:0.15px #000;">Солизим форте табл. №20</div>
<div class="t" style="left:670.50px;top:953.52px;font-size:16px;font-weight:bold;transform:scaleX(1.0893);-webkit-text-stroke:0.15px #000;">Технолог ЗАО</div>
<div class="t" style="left:898.00px;top:953.52px;font-size:16px;font-weight:bold;transform:scaleX(1.1755);-webkit-text-stroke:0.15px #000;">4820022241139</div>
<div class="t" style="left:1442.00px;top:953.52px;font-size:16px;font-weight:bold;transform:scaleX(1.1241);-webkit-text-stroke:0.15px #000;">03.05.2020 ...</div>
<div class="r" style="left:0px;top:975px;width:1726px;height:1px;background:#a9a9a9;"></div>
<div class="cb" style="left:1129px;top:952px"></div>
<div class="cb" style="left:1312px;top:952px"><svg width="20" height="19" viewBox="0 0 20 19"><path d="M2.8 8.8 L7.3 13.6 L16.2 4.6" fill="none" stroke="#444" stroke-width="1.9"/></svg></div>
<div class="t" style="left:124.76px;top:980.52px;font-size:16px;font-weight:bold;transform:scaleX(1.1742);-webkit-text-stroke:0.15px #000;">20827</div>
<div class="t" style="left:185.00px;top:980.52px;font-size:16px;font-weight:bold;transform:scaleX(1.0851);-webkit-text-stroke:0.15px #000;">Солковагин р-р фл. 0,5мл №2</div>
<div class="t" style="left:670.50px;top:980.52px;font-size:16px;font-weight:bold;transform:scaleX(1.0777);-webkit-text-stroke:0.15px #000;">ICN Switzerland</div>
<div class="t" style="left:898.00px;top:980.52px;font-size:16px;font-weight:bold;transform:scaleX(1.1742);-webkit-text-stroke:0.15px #000;">4019338603209</div>
<div class="t" style="left:1442.00px;top:980.52px;font-size:16px;font-weight:bold;transform:scaleX(1.1241);-webkit-text-stroke:0.15px #000;">03.05.2020 ...</div>
<div class="r" style="left:0px;top:1002px;width:1726px;height:1px;background:#a9a9a9;"></div>
<div class="cb" style="left:1129px;top:979px"></div>
<div class="cb" style="left:1312px;top:979px"><svg width="20" height="19" viewBox="0 0 20 19"><path d="M2.8 8.8 L7.3 13.6 L16.2 4.6" fill="none" stroke="#444" stroke-width="1.9"/></svg></div>
<div class="t" style="left:124.76px;top:1007.52px;font-size:16px;font-weight:bold;transform:scaleX(1.1742);-webkit-text-stroke:0.15px #000;">20828</div>
<div class="t" style="left:185.00px;top:1007.52px;font-size:16px;font-weight:bold;transform:scaleX(1.1031);-webkit-text-stroke:0.15px #000;">Л/пласт АЛПЕ телесный разные размеры №18</div>
<div class="t" style="left:670.50px;top:1007.52px;font-size:16px;font-weight:bold;transform:scaleX(1.0994);-webkit-text-stroke:0.15px #000;">Planet Medical</div>
<div class="t" style="left:898.00px;top:1007.52px;font-size:16px;font-weight:bold;transform:scaleX(1.1742);-webkit-text-stroke:0.15px #000;">7640158260982</div>
<div class="t" style="left:1442.00px;top:1007.52px;font-size:16px;font-weight:bold;transform:scaleX(1.1241);-webkit-text-stroke:0.15px #000;">03.05.2020 ...</div>
<div class="r" style="left:0px;top:1029px;width:1726px;height:1px;background:#a9a9a9;"></div>
<div class="cb" style="left:1129px;top:1006px"></div>
<div class="cb" style="left:1312px;top:1006px"><svg width="20" height="19" viewBox="0 0 20 19"><path d="M2.8 8.8 L7.3 13.6 L16.2 4.6" fill="none" stroke="#444" stroke-width="1.9"/></svg></div>
<div class="t" style="left:124.76px;top:1034.52px;font-size:16px;font-weight:bold;transform:scaleX(1.1742);-webkit-text-stroke:0.15px #000;">20829</div>
<div class="t" style="left:185.00px;top:1034.52px;font-size:16px;font-weight:bold;transform:scaleX(1.1180);-webkit-text-stroke:0.15px #000;">Катетер Фолея 2 ход. CH 10</div>
<div class="t" style="left:670.50px;top:1034.52px;font-size:16px;font-weight:bold;transform:scaleX(1.1022);-webkit-text-stroke:0.15px #000;">Troge Medical</div>
<div class="t" style="left:898.00px;top:1034.52px;font-size:16px;font-weight:bold;transform:scaleX(1.1742);-webkit-text-stroke:0.15px #000;">2000000348018</div>
<div class="t" style="left:1442.00px;top:1034.52px;font-size:16px;font-weight:bold;transform:scaleX(1.1241);-webkit-text-stroke:0.15px #000;">03.05.2020 ...</div>
<div class="r" style="left:0px;top:1056px;width:1726px;height:1px;background:#a9a9a9;"></div>
<div class="cb" style="left:1129px;top:1033px"></div>
<div class="cb" style="left:1312px;top:1033px"><svg width="20" height="19" viewBox="0 0 20 19"><path d="M2.8 8.8 L7.3 13.6 L16.2 4.6" fill="none" stroke="#444" stroke-width="1.9"/></svg></div>
<div class="t" style="left:124.76px;top:1061.52px;font-size:16px;font-weight:bold;transform:scaleX(1.1742);-webkit-text-stroke:0.15px #000;">20830</div>
<div class="t" style="left:185.00px;top:1061.52px;font-size:16px;font-weight:bold;transform:scaleX(1.0816);-webkit-text-stroke:0.15px #000;">Л/пласт АЛПЕ Фемили Ролфикс бумаж.(12,5мм х 4,5м...</div>
<div class="t" style="left:670.50px;top:1061.52px;font-size:16px;font-weight:bold;transform:scaleX(1.0994);-webkit-text-stroke:0.15px #000;">Planet Medical</div>
<div class="t" style="left:898.00px;top:1061.52px;font-size:16px;font-weight:bold;transform:scaleX(1.1742);-webkit-text-stroke:0.15px #000;">7640158262139</div>
<div class="t" style="left:1442.00px;top:1061.52px;font-size:16px;font-weight:bold;transform:scaleX(1.1241);-webkit-text-stroke:0.15px #000;">03.05.2020 ...</div>
<div class="r" style="left:0px;top:1083px;width:1726px;height:1px;background:#a9a9a9;"></div>
<div class="cb" style="left:1129px;top:1060px"></div>
<div class="cb" style="left:1312px;top:1060px"><svg width="20" height="19" viewBox="0 0 20 19"><path d="M2.8 8.8 L7.3 13.6 L16.2 4.6" fill="none" stroke="#444" stroke-width="1.9"/></svg></div>
<div class="t" style="left:124.76px;top:1088.52px;font-size:16px;font-weight:bold;transform:scaleX(1.1742);-webkit-text-stroke:0.15px #000;">20831</div>
<div class="t" style="left:185.00px;top:1088.52px;font-size:16px;font-weight:bold;transform:scaleX(1.0842);-webkit-text-stroke:0.15px #000;">Л/пласт АЛПЕ Фемили Ролфикс бумаж.(25мм х 4,5м) ...</div>
<div class="t" style="left:670.50px;top:1088.52px;font-size:16px;font-weight:bold;transform:scaleX(1.0994);-webkit-text-stroke:0.15px #000;">Planet Medical</div>
<div class="t" style="left:898.00px;top:1088.52px;font-size:16px;font-weight:bold;transform:scaleX(1.1742);-webkit-text-stroke:0.15px #000;">7640158262160</div>
<div class="t" style="left:1442.00px;top:1088.52px;font-size:16px;font-weight:bold;transform:scaleX(1.1241);-webkit-text-stroke:0.15px #000;">03.05.2020 ...</div>
<div class="r" style="left:0px;top:1110px;width:1726px;height:1px;background:#a9a9a9;"></div>
<div class="cb" style="left:1129px;top:1087px"></div>
<div class="cb" style="left:1312px;top:1087px"><svg width="20" height="19" viewBox="0 0 20 19"><path d="M2.8 8.8 L7.3 13.6 L16.2 4.6" fill="none" stroke="#444" stroke-width="1.9"/></svg></div>
<div class="t" style="left:124.76px;top:1115.52px;font-size:16px;font-weight:bold;transform:scaleX(1.1742);-webkit-text-stroke:0.15px #000;">20832</div>
<div class="t" style="left:185.00px;top:1115.52px;font-size:16px;font-weight:bold;transform:scaleX(1.0794);-webkit-text-stroke:0.15px #000;">Л/пласт АЛПЕ Фемили Ролфикс ткан. (12,5мм х 4,5м) ...</div>
<div class="t" style="left:670.50px;top:1115.52px;font-size:16px;font-weight:bold;transform:scaleX(1.0994);-webkit-text-stroke:0.15px #000;">Planet Medical</div>
<div class="t" style="left:898.00px;top:1115.52px;font-size:16px;font-weight:bold;transform:scaleX(1.1742);-webkit-text-stroke:0.15px #000;">7640158262177</div>
<div class="t" style="left:1442.00px;top:1115.52px;font-size:16px;font-weight:bold;transform:scaleX(1.1241);-webkit-text-stroke:0.15px #000;">03.05.2020 ...</div>
<div class="r" style="left:0px;top:1137px;width:1726px;height:1px;background:#a9a9a9;"></div>
<div class="cb" style="left:1129px;top:1114px"></div>
<div class="cb" style="left:1312px;top:1114px"><svg width="20" height="19" viewBox="0 0 20 19"><path d="M2.8 8.8 L7.3 13.6 L16.2 4.6" fill="none" stroke="#444" stroke-width="1.9"/></svg></div>
<div class="t" style="left:124.76px;top:1142.52px;font-size:16px;font-weight:bold;transform:scaleX(1.1742);-webkit-text-stroke:0.15px #000;">20833</div>
<div class="t" style="left:185.00px;top:1142.52px;font-size:16px;font-weight:bold;transform:scaleX(1.0748);-webkit-text-stroke:0.15px #000;">Л/пласт АЛПЕ Фемили Эконом классич. мягкий №300</div>
<div class="t" style="left:670.50px;top:1142.52px;font-size:16px;font-weight:bold;transform:scaleX(1.0994);-webkit-text-stroke:0.15px #000;">Planet Medical</div>
<div class="t" style="left:898.00px;top:1142.52px;font-size:16px;font-weight:bold;transform:scaleX(1.1742);-webkit-text-stroke:0.15px #000;">7640158262191</div>
<div class="t" style="left:1442.00px;top:1142.52px;font-size:16px;font-weight:bold;transform:scaleX(1.1241);-webkit-text-stroke:0.15px #000;">03.05.2020 ...</div>
<div class="r" style="left:0px;top:1164px;width:1726px;height:1px;background:#a9a9a9;"></div>
<div class="cb" style="left:1129px;top:1141px"></div>
<div class="cb" style="left:1312px;top:1141px"><svg width="20" height="19" viewBox="0 0 20 19"><path d="M2.8 8.8 L7.3 13.6 L16.2 4.6" fill="none" stroke="#444" stroke-width="1.9"/></svg></div>
<div class="t" style="left:124.76px;top:1169.52px;font-size:16px;font-weight:bold;transform:scaleX(1.1742);-webkit-text-stroke:0.15px #000;">20834</div>
<div class="t" style="left:185.00px;top:1169.52px;font-size:16px;font-weight:bold;transform:scaleX(1.1323);-webkit-text-stroke:0.15px #000;">Метронидазол супп. ваг. 0,1г №10</div>
<div class="t" style="left:670.50px;top:1169.52px;font-size:16px;font-weight:bold;transform:scaleX(1.0433);-webkit-text-stroke:0.15px #000;">Монфарм</div>
<div class="t" style="left:898.00px;top:1169.52px;font-size:16px;font-weight:bold;transform:scaleX(1.1742);-webkit-text-stroke:0.15px #000;">4820013360405</div>
<div class="t" style="left:1442.00px;top:1169.52px;font-size:16px;font-weight:bold;transform:scaleX(1.1241);-webkit-text-stroke:0.15px #000;">03.05.2020 ...</div>
<div class="r" style="left:0px;top:1191px;width:1726px;height:1px;background:#a9a9a9;"></div>
<div class="cb" style="left:1129px;top:1168px"></div>
<div class="cb" style="left:1312px;top:1168px"><svg width="20" height="19" viewBox="0 0 20 19"><path d="M2.8 8.8 L7.3 13.6 L16.2 4.6" fill="none" stroke="#444" stroke-width="1.9"/></svg></div>
<div class="t" style="left:124.76px;top:1196.52px;font-size:16px;font-weight:bold;transform:scaleX(1.1742);-webkit-text-stroke:0.15px #000;">20835</div>
<div class="t" style="left:185.00px;top:1196.52px;font-size:16px;font-weight:bold;transform:scaleX(1.1317);-webkit-text-stroke:0.15px #000;">Метронидазол табл. 250мг №10</div>
<div class="t" style="left:670.50px;top:1196.52px;font-size:16px;font-weight:bold;transform:scaleX(1.0449);-webkit-text-stroke:0.15px #000;">Лубныфарм ОАО</div>
<div class="t" style="left:898.00px;top:1196.52px;font-size:16px;font-weight:bold;transform:scaleX(1.1742);-webkit-text-stroke:0.15px #000;">4820007357749</div>
<div class="t" style="left:1442.00px;top:1196.52px;font-size:16px;font-weight:bold;transform:scaleX(1.1241);-webkit-text-stroke:0.15px #000;">03.05.2020 ...</div>
<div class="r" style="left:0px;top:1218px;width:1726px;height:1px;background:#a9a9a9;"></div>
<div class="cb" style="left:1129px;top:1195px"></div>
<div class="cb" style="left:1312px;top:1195px"><svg width="20" height="19" viewBox="0 0 20 19"><path d="M2.8 8.8 L7.3 13.6 L16.2 4.6" fill="none" stroke="#444" stroke-width="1.9"/></svg></div>
<div class="t" style="left:124.76px;top:1223.52px;font-size:16px;font-weight:bold;transform:scaleX(1.1742);-webkit-text-stroke:0.15px #000;">20836</div>
<div class="t" style="left:185.00px;top:1223.52px;font-size:16px;font-weight:bold;transform:scaleX(1.1457);-webkit-text-stroke:0.15px #000;">Метфогамма 1000 табл. №120*</div>
<div class="t" style="left:670.50px;top:1223.52px;font-size:16px;font-weight:bold;transform:scaleX(1.1062);-webkit-text-stroke:0.15px #000;">Woerwag Pharma</div>
<div class="t" style="left:898.00px;top:1223.52px;font-size:16px;font-weight:bold;transform:scaleX(1.1742);-webkit-text-stroke:0.15px #000;">4030674010407</div>
<div class="t" style="left:1442.00px;top:1223.52px;font-size:16px;font-weight:bold;transform:scaleX(1.1241);-webkit-text-stroke:0.15px #000;">03.05.2020 ...</div>
<div class="cb" style="left:1129px;top:1222px"></div>
<div class="cb" style="left:1312px;top:1222px"><svg width="20" height="19" viewBox="0 0 20 19"><path d="M2.8 8.8 L7.3 13.6 L16.2 4.6" fill="none" stroke="#444" stroke-width="1.9"/></svg></div>
<div class="r" style="left:17px;top:274px;width:1px;height:969px;background:#a9a9a9;"></div>
<div class="r" style="left:180px;top:274px;width:1px;height:969px;background:#a9a9a9;"></div>
<div class="r" style="left:666px;top:274px;width:1px;height:969px;background:#a9a9a9;"></div>
<div class="r" style="left:894px;top:274px;width:1px;height:969px;background:#a9a9a9;"></div>
<div class="r" style="left:1070px;top:274px;width:1px;height:969px;background:#a9a9a9;"></div>
<div class="r" style="left:1208px;top:274px;width:1px;height:969px;background:#a9a9a9;"></div>
<div class="r" style="left:1438px;top:274px;width:1px;height:969px;background:#a9a9a9;"></div>
<div class="r" style="left:1560px;top:274px;width:1px;height:969px;background:#a9a9a9;"></div>
<div class="r" style="left:1616px;top:274px;width:1px;height:969px;background:#a9a9a9;"></div>
<div class="r" style="left:1725px;top:274px;width:1px;height:969px;background:#a9a9a9;"></div>
<svg class="r" style="left:5px;top:279px" width="10" height="16"><path d="M1 1 L9 8 L1 15 Z" fill="#000"/></svg>
<div class="r" style="left:0px;top:1243px;width:1726px;height:3px;background:#acacac;"></div>
<div class="r" style="left:0px;top:1246px;width:1726px;height:32px;background:#f0f0f0;"></div>
<div class="r" style="left:17px;top:1247px;width:1px;height:31px;background:#c2c2c2;"></div>
<div class="r" style="left:183px;top:1248px;width:482px;height:28px;background:#e6e9ea;border:1px solid #dcdcdc;box-sizing:border-box;"></div>
<div class="t" style="left:188.00px;top:1253.52px;font-size:16px;font-weight:bold;transform:scaleX(1.0914);-webkit-text-stroke:0.15px #111;color:#111;">Запис 1 із 17256</div>
<div class="r" style="left:0px;top:1278px;width:1726px;height:1px;background:#c2c2c2;"></div>
<div class="r" style="left:1725px;top:1245px;width:1px;height:34px;background:#c2c2c2;"></div>
<div class="r" style="left:2136px;top:191px;width:23px;height:1088px;background:#f0f0f0;"></div>
<div class="r" style="left:2135px;top:191px;width:1px;height:54px;background:#fafafa;"></div>
<div class="r" style="left:2136px;top:216px;width:23px;height:25px;background:#cdcdcd;"></div>
<div class="r" style="left:6px;top:1283px;width:19px;height:19px;background:#ffffff;border:1px solid #333;box-sizing:border-box;"></div>
<div class="r" style="left:29px;top:1281px;width:146px;height:22px;border:1px dotted #333;box-sizing:border-box"></div>
<div class="t" style="left:30.00px;top:1284.07px;font-size:16.5px;letter-spacing:0.230px;color:#1a1a1a;">Показувати деталі</div>
<div class="r" style="left:5px;top:1308px;width:187px;height:34px;background:#efefef;border:2px solid #222;box-sizing:border-box;"></div>
<div class="t" style="left:10.00px;top:1315.07px;font-size:16.5px;letter-spacing:-0.242px;color:#1a1a1a;">Головна</div>
<div class="r" style="left:195px;top:1308px;width:188px;height:34px;background:#fdd3ae;border:2px solid #3c8be0;box-sizing:border-box;"></div>
<div class="t" style="left:198.00px;top:1315.07px;font-size:16.5px;letter-spacing:0.312px;color:#1a1a1a;">Штрих-коди товарів</div>
<div class="r" style="left:0px;top:1345px;width:2159px;height:1px;background:#dadada;"></div>
<div class="t" style="left:31.00px;top:1351.01px;font-size:18px;transform:scaleX(0.9082);color:#111;">База даних: TASA3@TITAN</div>
<div class="r" style="left:297px;top:1348px;width:1px;height:24px;background:#d0d0d0;"></div>
<div class="t" style="left:329.00px;top:1351.01px;font-size:18px;transform:scaleX(0.8882);color:#111;">Користувач: GIFT</div>
<div class="r" style="left:603px;top:1348px;width:1px;height:24px;background:#d0d0d0;"></div>
<div class="t" style="left:635.50px;top:1351.01px;font-size:18px;color:#111;">4</div>
<div class="r" style="left:661px;top:1348px;width:1px;height:24px;background:#d0d0d0;"></div>
<div class="t" style="left:667.00px;top:1351.01px;font-size:18px;transform:scaleX(0.9144);color:#111;">Кассовый аппарат не подключен</div>
<div class="r" style="left:1118px;top:1348px;width:1px;height:24px;background:#d0d0d0;"></div>
<div class="t" style="left:1123.00px;top:1351.01px;font-size:18px;transform:scaleX(0.8988);color:#111;">Зона: Склад [1]</div>
<svg class="r" style="left:3px;top:-1.5px" width="22" height="25" viewBox="0 0 22 25"><g fill="#ff7300"><path d="M6.5 0 H17.5 L17.5 6 H6.5 Z"/><path d="M1.5 6 H6.5 V18 H1.5 Q0 18 0 16 V8 Q0 6 1.5 6Z"/><path d="M6.5 18 H17.5 V22.5 Q17.5 24 16 24 H8 Q6.5 24 6.5 22.5Z"/><rect x="17.5" y="6" width="3.5" height="4.5" rx="1.5"/><rect x="17.5" y="13.5" width="3.5" height="4.5" rx="1.5"/></g></svg>
<svg class="r" style="left:12px;top:30px" width="22" height="25" viewBox="0 0 22 25"><g fill="#ff7300"><path d="M6.5 0 H17.5 L17.5 6 H6.5 Z"/><path d="M1.5 6 H6.5 V18 H1.5 Q0 18 0 16 V8 Q0 6 1.5 6Z"/><path d="M6.5 18 H17.5 V22.5 Q17.5 24 16 24 H8 Q6.5 24 6.5 22.5Z"/><rect x="17.5" y="6" width="3.5" height="4.5" rx="1.5"/><rect x="17.5" y="13.5" width="3.5" height="4.5" rx="1.5"/></g></svg>
<div class="r" style="left:1976px;top:10px;width:15px;height:1px;background:#000;"></div>
<svg class="r" style="left:2044px;top:2px" width="18" height="18" viewBox="0 0 18 18"><path d="M4.5 1.5 H15.5 V12.5 H12.5" fill="none" stroke="#000" stroke-width="1.1"/><rect x="1.5" y="4.5" width="11" height="11" fill="none" stroke="#000" stroke-width="1.1"/></svg>
<svg class="r" style="left:2115px;top:2px" width="18" height="18" viewBox="0 0 18 18"><path d="M1 1 L16 16 M16 1 L1 16" stroke="#000" stroke-width="1.1"/></svg>
<div class="r" style="left:2075px;top:31px;width:26px;height:26px;background:#ffffff;border:1px solid #e3e3e3;box-sizing:border-box;"></div>
<div class="r" style="left:2103px;top:31px;width:26px;height:26px;background:#ffffff;border:1px solid #e3e3e3;box-sizing:border-box;"></div>
<div class="r" style="left:2132px;top:31px;width:26px;height:26px;background:#ffffff;border:1px solid #e3e3e3;box-sizing:border-box;"></div>
<div class="r" style="left:2082px;top:47px;width:9px;height:3px;background:#7d8a96;"></div>
<svg class="r" style="left:2108px;top:36px" width="16" height="16" viewBox="0 0 16 16"><path d="M5 4.5 V2 H14 V8 H11.5" fill="none" stroke="#7d8a96" stroke-width="2"/><rect x="2" y="6" width="9.5" height="7" fill="none" stroke="#7d8a96" stroke-width="2"/><rect x="2" y="6" width="9.5" height="2.2" fill="#7d8a96"/></svg>
<svg class="r" style="left:2139px;top:39px" width="13" height="12" viewBox="0 0 13 12"><path d="M1.5 1.5 L11.5 10.5 M11.5 1.5 L1.5 10.5" stroke="#7d8a96" stroke-width="2.6"/></svg>
<svg class="r" style="left:12px;top:125px" width="22" height="23" viewBox="0 0 22 23"><circle cx="8.2" cy="8.5" r="5.6" fill="#eef2ff" stroke="#9aa8c2" stroke-width="1.6"/><path d="M12.3 12.6 L18.5 18.5" stroke="#505860" stroke-width="2.4" stroke-linecap="round"/></svg>
<div class="r" style="left:4.5px;top:159.5px;width:4.5px;height:1.5px;background:#a6a6a6;"></div>
<div class="r" style="left:4.5px;top:162.5px;width:4.5px;height:1.5px;background:#a6a6a6;"></div>
<div class="r" style="left:4.5px;top:165.5px;width:4.5px;height:1.5px;background:#a6a6a6;"></div>
<div class="r" style="left:4.5px;top:168.5px;width:4.5px;height:1.5px;background:#a6a6a6;"></div>
<div class="r" style="left:4.5px;top:171.5px;width:4.5px;height:1.5px;background:#a6a6a6;"></div>
<div class="r" style="left:4.5px;top:174.5px;width:4.5px;height:1.5px;background:#a6a6a6;"></div>
<div class="r" style="left:4.5px;top:177.5px;width:4.5px;height:1.5px;background:#a6a6a6;"></div>
<div class="r" style="left:4.5px;top:180.5px;width:4.5px;height:1.5px;background:#a6a6a6;"></div>
<svg class="r" style="left:17px;top:160px" width="23" height="23" viewBox="0 0 23 23"><defs><linearGradient id="gp" x1="0" y1="0" x2="0" y2="1"><stop offset="0" stop-color="#a6e8a6"/><stop offset="1" stop-color="#62bf62"/></linearGradient></defs><path d="M8.5 1 H14.5 V8 H21.5 V14 H14.5 V21.5 H8.5 V14 H1 V8 H8.5 Z" fill="url(#gp)" stroke="#6cc46c" stroke-width="0.8"/></svg>
<svg class="r" style="left:112px;top:153px" width="34" height="34" viewBox="0 0 34 34"><g transform="rotate(-45 17 17)"><rect x="8" y="19" width="25" height="4" fill="#8a8a8a" opacity="0.45"/><path d="M7.5 13.5 H26.5 V20.5 H7.5 Z" fill="#f2c200" stroke="#a88400" stroke-width="0.8"/><rect x="7.5" y="14" width="19" height="2.4" fill="#ffe46a"/><rect x="26.5" y="13.5" width="2.6" height="7" fill="#d0d0d0" stroke="#999" stroke-width="0.5"/><path d="M29.1 13.5 H31.5 Q33.5 13.5 33.5 15.5 V18.5 Q33.5 20.5 31.5 20.5 H29.1 Z" fill="#e84a3a"/><path d="M7.5 13.5 L1 17 L7.5 20.5 Z" fill="#f3b48c" stroke="#b07050" stroke-width="0.6"/><path d="M3 16 L1 17 L3 18 Z" fill="#222"/></g></svg>
<svg class="r" style="left:254px;top:160px" width="23" height="23" viewBox="0 0 23 23"><defs><linearGradient id="gx" x1="0" y1="0" x2="0" y2="1"><stop offset="0" stop-color="#ffb5a0"/><stop offset="1" stop-color="#f5755c"/></linearGradient></defs><path d="M3.5 1 L11.5 8.5 L19.5 1 L22 3.5 L14.5 11.5 L22 19.5 L19.5 22 L11.5 14.5 L3.5 22 L1 19.5 L8.5 11.5 L1 3.5 Z" fill="url(#gx)" stroke="#f08a76" stroke-width="0.8" stroke-linejoin="round"/></svg>
<svg class="r" style="left:432px;top:159px" width="24" height="25" viewBox="0 0 24 25"><path d="M2 3 Q12 -1 22 3 L14 13 V22 Q12 24 10 22 V13 Z" fill="#f4f4f4" stroke="#a8a8a8" stroke-width="1.4" stroke-linejoin="round"/><ellipse cx="12" cy="3.5" rx="6" ry="1.2" fill="#888"/><rect x="12.5" y="8" width="2" height="13" fill="#c8c8c8"/></svg>
<svg class="r" style="left:529px;top:159px" width="24" height="24" viewBox="0 0 24 24"><rect x="4" y="1" width="19" height="20" rx="1" fill="#a9c6e0" stroke="#7fa6c8" stroke-width="1"/><rect x="8" y="1.5" width="10" height="6" fill="#6d8fb3"/><rect x="13" y="2" width="3" height="4.5" fill="#e8f0f8"/><rect x="7" y="10" width="14" height="9.5" fill="#f4f6f8"/><circle cx="6" cy="18" r="4.2" fill="#c8d0d8" stroke="#aab4be" stroke-width="1.5"/><circle cx="6" cy="18" r="1.4" fill="#6a8fb5"/></svg>
<svg class="r" style="left:730px;top:159px" width="25" height="25" viewBox="0 0 25 25"><rect x="5" y="1" width="14.5" height="8" fill="#e8f2ff" stroke="#a8cdf0" stroke-width="1"/><defs><linearGradient id="gpr" x1="0" y1="0" x2="0" y2="1"><stop offset="0" stop-color="#e0e0e0"/><stop offset="0.5" stop-color="#c2c2c2"/><stop offset="1" stop-color="#8a8a8a"/></linearGradient></defs><rect x="0.8" y="8" width="23.2" height="13" rx="3" fill="url(#gpr)" stroke="#bcbcbc" stroke-width="1"/><rect x="5" y="20" width="14.5" height="4" fill="#e8f2ff" stroke="#a8cdf0" stroke-width="1"/></svg>
<div class="r" style="left:814px;top:164.0px;width:7.5px;height:1.6px;background:#9a9a9a;"></div>
<div class="r" style="left:825px;top:164.0px;width:7.5px;height:1.6px;background:#7a7a7a;"></div>
<div class="r" style="left:814px;top:167.2px;width:7.5px;height:1.6px;background:#9a9a9a;"></div>
<div class="r" style="left:825px;top:167.2px;width:7.5px;height:1.6px;background:#7a7a7a;"></div>
<div class="r" style="left:814px;top:170.4px;width:7.5px;height:1.6px;background:#9a9a9a;"></div>
<div class="r" style="left:825px;top:170.4px;width:7.5px;height:1.6px;background:#7a7a7a;"></div>
<div class="r" style="left:814px;top:173.6px;width:7.5px;height:1.6px;background:#9a9a9a;"></div>
<div class="r" style="left:825px;top:173.6px;width:7.5px;height:1.6px;background:#7a7a7a;"></div>
<div class="r" style="left:814px;top:176.8px;width:7.5px;height:1.6px;background:#9a9a9a;"></div>
<div class="r" style="left:825px;top:176.8px;width:7.5px;height:1.6px;background:#7a7a7a;"></div>
<div class="r" style="left:814px;top:180.0px;width:7.5px;height:1.6px;background:#9a9a9a;"></div>
<div class="r" style="left:825px;top:180.0px;width:7.5px;height:1.6px;background:#7a7a7a;"></div>
<svg class="r" style="left:2031px;top:160px" width="24" height="23" viewBox="0 0 24 23"><defs><linearGradient id="gr1" x1="0" y1="0" x2="0" y2="1"><stop offset="0" stop-color="#a8dcff"/><stop offset="1" stop-color="#d8eefc"/></linearGradient><linearGradient id="gr2" x1="0" y1="0" x2="0" y2="1"><stop offset="0" stop-color="#d0ecfc"/><stop offset="1" stop-color="#48b0f0"/></linearGradient></defs><path d="M11 4.5 A7 7 0 0 0 11 18.5" fill="none" stroke="url(#gr1)" stroke-width="6"/><path d="M1.5 0.5 H11.5 V9.5 Z" fill="#a8dcff"/><path d="M12.5 4.5 A7 7 0 0 1 12.5 18.5" fill="none" stroke="url(#gr2)" stroke-width="6"/><path d="M22.5 22.5 H12.5 V13.5 Z" fill="#48b0f0"/><path d="M4 21.5 H20" stroke="#c8c8c8" stroke-width="1" opacity="0.6"/></svg>
<svg class="r" style="left:2144px;top:176px" width="10" height="7" viewBox="0 0 10 7"><path d="M0.5 1 H9 L4.75 6 Z" fill="#111"/></svg>
<svg class="r" style="left:2141px;top:199px" width="13" height="11" viewBox="0 0 13 11"><path d="M1.5 9 L6.5 3 L11.5 9" fill="none" stroke="#606060" stroke-width="2.6"/></svg>
<svg class="r" style="left:2141px;top:1261px" width="13" height="11" viewBox="0 0 13 11"><path d="M1.5 2 L6.5 8 L11.5 2" fill="none" stroke="#606060" stroke-width="2.6"/></svg>
<svg class="r" style="left:3px;top:251px" width="12" height="16" viewBox="0 0 12 16"><g fill="#111"><circle cx="2" cy="2.2" r="1"/><circle cx="2" cy="8.2" r="1"/><circle cx="2" cy="14.2" r="1"/><rect x="4.5" y="1.5" width="6" height="1.5" rx="0.7"/><rect x="4.5" y="4.5" width="6" height="1.5" rx="0.7"/><rect x="4.5" y="7.5" width="6" height="1.5" rx="0.7"/><rect x="4.5" y="10.5" width="6" height="1.5" rx="0.7"/><rect x="4.5" y="13.5" width="6" height="1.5" rx="0.7"/></g></svg>
<svg class="r" style="left:4px;top:1350px" width="19" height="22" viewBox="0 0 19 22"><defs><linearGradient id="gdb" x1="0" y1="0" x2="1" y2="0"><stop offset="0" stop-color="#8aa0e0"/><stop offset="1" stop-color="#6a70b0"/></linearGradient></defs><rect x="1" y="1" width="17" height="20" rx="2" fill="url(#gdb)"/><rect x="1" y="1" width="17" height="5" rx="2" fill="#d8d8f0"/><rect x="1" y="7" width="17" height="2" fill="#2a88e0"/><rect x="1" y="11" width="17" height="2" fill="#2a88e0"/><rect x="1" y="15" width="17" height="2" fill="#2a88e0"/></svg>
<svg class="r" style="left:303px;top:1350px" width="18" height="22" viewBox="0 0 18 22"><circle cx="9" cy="7" r="5" fill="#a8b4e8"/><path d="M4 3 A6 6 0 0 1 12 1.5" stroke="#e03020" stroke-width="2.5" fill="none"/><path d="M1 21 Q1 13 9 13 Q17 13 17 21 Z" fill="#9ca8e0"/><path d="M7 13 L9 16 L11 13 Z" fill="#f0a040"/></svg>
<svg class="r" style="left:606px;top:1350px" width="22" height="22" viewBox="0 0 22 22"><path d="M2 8 L11 3 L20 8 V18 H2 Z" fill="#8e96d8"/><path d="M11 3 L14 0" stroke="#555" stroke-width="1"/><path d="M5 22 L7 15 M15 22 L17 15" stroke="#e8c020" stroke-width="2.5"/><path d="M2 8 H20" stroke="#6870b8" stroke-width="1"/></svg>
<svg class="r" style="left:0;top:0" width="2159" height="1372" viewBox="0 0 2159 1372"><path d="M178.8 185.3 L196.5 190.3 Q198 192.5 196 193.8 L191.8 194.2 L575.8 544.2 L574.3 545.9 L187.5 198.3 L186.5 202 Q184.5 203.5 183 201.5 Z" fill="#f50000" stroke="#f50000" stroke-width="0.8" stroke-linejoin="round"/></svg>
</body></html>
